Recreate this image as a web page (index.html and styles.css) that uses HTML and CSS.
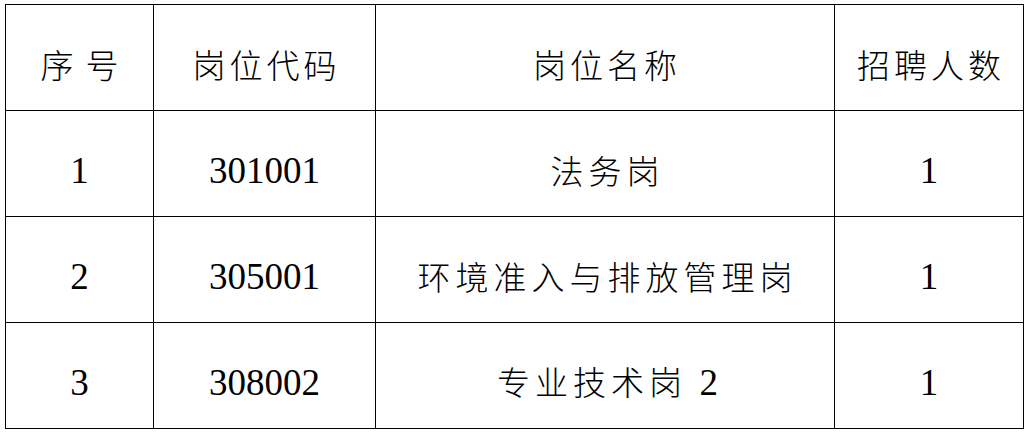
FILE: index.html
```html
<!DOCTYPE html>
<html lang="zh">
<head>
<meta charset="utf-8">
<link rel="stylesheet" href="styles.css">
</head>
<body>
<div class="page">
<table class="jobs">
  <colgroup>
    <col class="c1"><col class="c2"><col class="c3"><col class="c4">
  </colgroup>
  <thead>
    <tr>
      <th class="wide">序号</th>
      <th>岗位代码</th>
      <th>岗位名称</th>
      <th>招聘人数</th>
    </tr>
  </thead>
  <tbody>
    <tr>
      <td class="num">1</td>
      <td class="num">301001</td>
      <td class="cjk">法务岗</td>
      <td class="num">1</td>
    </tr>
    <tr>
      <td class="num">2</td>
      <td class="num">305001</td>
      <td class="cjk">环境准入与排放管理岗</td>
      <td class="num">1</td>
    </tr>
    <tr>
      <td class="num">3</td>
      <td class="num">308002</td>
      <td class="cjk">专业技术岗 <span class="digit">2</span></td>
      <td class="num">1</td>
    </tr>
  </tbody>
</table>
</div>
</body>
</html>
```

FILE: styles.css
```css
html, body {
  margin: 0;
  padding: 0;
  background: #ffffff;
}
.page {
  padding: 4px 0 0 5px;
}
.jobs {
  border-collapse: collapse;
  table-layout: fixed;
  width: 1018px;
  color: #000;
}
.c1 { width: 148px; }
.c2 { width: 222px; }
.c3 { width: 459px; }
.c4 { width: 189px; }
.jobs th, .jobs td {
  border: 1.5px solid #000;
  height: 106px;
  padding: 14px 0 0 0;
  box-sizing: border-box;
  text-align: center;
  vertical-align: middle;
  font-weight: 300;
  line-height: 1;
}
.jobs th {
  font-family: "Noto Sans CJK SC", sans-serif;
  font-size: 33px;
  letter-spacing: 4px;
  text-indent: 4px;
}
.jobs th.wide {
  letter-spacing: 12px;
  text-indent: 12px;
}
.jobs td.num {
  font-family: "Liberation Serif", serif;
  font-size: 37px;
  font-weight: 400;
}
.jobs td.cjk {
  font-family: "Noto Sans CJK SC", sans-serif;
  font-size: 33px;
  letter-spacing: 5px;
  text-indent: 5px;
}
.digit {
  font-family: "Liberation Serif", serif;
  font-size: 37px;
  font-weight: 400;
  letter-spacing: 0;
}
```
